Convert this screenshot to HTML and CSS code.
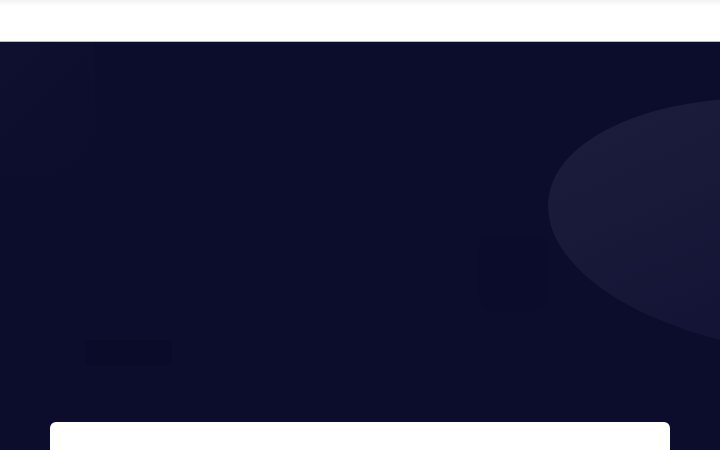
FILE: index.html
```html
<!DOCTYPE html>
<html lang="en">
<head>
<meta charset="utf-8">
<title>Landing</title>
<link rel="stylesheet" href="styles.css">
</head>
<body>
<header class="topbar"></header>
<main class="hero">
  <div class="ghost-panel"></div>
  <div class="blob"></div>
  <div class="ghost-figure"></div>
  <div class="hero-copy">
    <span class="ghost-button"></span>
  </div>
  <section class="card"></section>
</main>
</body>
</html>
```
FILE: styles.css
```css
html, body {
  margin: 0;
  padding: 0;
  height: 100%;
  overflow: hidden;
  font-family: "Inter", "Liberation Sans", sans-serif;
  background: #0c0c2c;
}
.topbar {
  height: 42px;
  background: linear-gradient(#f3f3f3 0px, #ffffff 6px, #ffffff 40px);
  border-bottom: 1px solid #b9b9c4;
  box-sizing: border-box;
}
.hero {
  position: relative;
  height: 408px;
  background: #0c0c2c;
  overflow: hidden;
  display: flex;
  flex-direction: column;
  justify-content: flex-end;
  padding: 0 50px;
}
.ghost-panel {
  position: absolute;
  left: 0;
  top: 0;
  width: 95px;
  height: 133px;
  background: linear-gradient(135deg, #0f0f2f, #0c0c2c);
}
.blob {
  position: absolute;
  left: 547px;
  top: 58px;
  width: 506px;
  height: 252px;
  border-radius: 50%;
  transform: rotate(6deg);
  background: linear-gradient(150deg, #1c1c3b 0%, #19193a 30%, #141436 60%, #101031 100%);
}
.ghost-figure {
  position: absolute;
  left: 478px;
  top: 192px;
  width: 70px;
  height: 78px;
  border-radius: 20px;
  background: #0b0b2a;
  opacity: 0.45;
}
.hero-copy {
  position: absolute;
  left: 85px;
  top: 298px;
}
.ghost-button {
  display: block;
  width: 87px;
  height: 25px;
  border-radius: 4px;
  background: #0a0a29;
  opacity: 0.8;
}
.card {
  height: 28px;
  background: #ffffff;
  border-radius: 6px 6px 0 0;
  width: 620px;
}
```
